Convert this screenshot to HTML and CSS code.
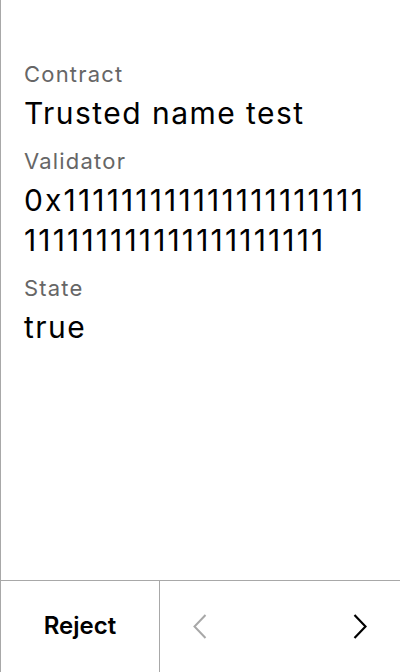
FILE: index.html
```html
<!DOCTYPE html>
<html>
<head>
<meta charset="utf-8">
<link rel="stylesheet" href="styles.css">
</head>
<body>
<div class="screen">
  <div class="content">
    <div class="field">
      <div class="label">Contract</div>
      <div class="value">Trusted name test</div>
    </div>
    <div class="field">
      <div class="label">Validator</div>
      <div class="value address">0x111111111111111111111111111111111111111111</div>
    </div>
    <div class="field">
      <div class="label">State</div>
      <div class="value">true</div>
    </div>
  </div>
  <div class="footer">
    <div class="reject">Reject</div>
    <div class="nav">
      <svg class="chev prev" width="14" height="25" viewBox="0 0 14 25"><path d="M12.5 1 L1.5 12.5 L12.5 24" fill="none" stroke="currentColor" stroke-width="2"/></svg>
    </div>
    <div class="spacer"></div>
    <div class="nav">
      <svg class="chev next" width="14" height="25" viewBox="0 0 14 25"><path d="M1.5 1 L12.5 12.5 L1.5 24" fill="none" stroke="currentColor" stroke-width="2.2"/></svg>
    </div>
  </div>
</div>
</body>
</html>
```
FILE: styles.css
```css
* { box-sizing: border-box; }
html, body { margin: 0; padding: 0; background: #fff; }
body { font-family: Inter, "Noto Sans", sans-serif; color: #000; }
.screen {
  width: 400px;
  height: 672px;
  display: flex;
  flex-direction: column;
  border-left: 1px solid #a8a8a8;
}
.content {
  flex: 1;
  padding: 60px 30px 0 23px;
  display: flex;
  flex-direction: column;
}
.label {
  font-size: 22px;
  line-height: 28px;
  letter-spacing: 1.2px;
  color: #666;
  margin-bottom: 5px;
}
.value {
  font-size: 30px;
  line-height: 40px;
  letter-spacing: 1.45px;
  word-break: break-all;
  margin-bottom: 14px;
}
.value.address {
  letter-spacing: 2.15px;
}
.footer {
  height: 92px;
  border-top: 1px solid #a8a8a8;
  display: grid;
  grid-template-columns: 159px 80px 1fr 80px;
}
.reject {
  border-right: 1px solid #a8a8a8;
  display: flex;
  align-items: center;
  justify-content: center;
  font-size: 24px;
  font-weight: 600;
  padding-bottom: 2px;
}
.nav {
  display: flex;
  align-items: center;
  justify-content: center;
}
.chev.prev { color: #a8a8a8; }
.chev.next { color: #000; }
```
